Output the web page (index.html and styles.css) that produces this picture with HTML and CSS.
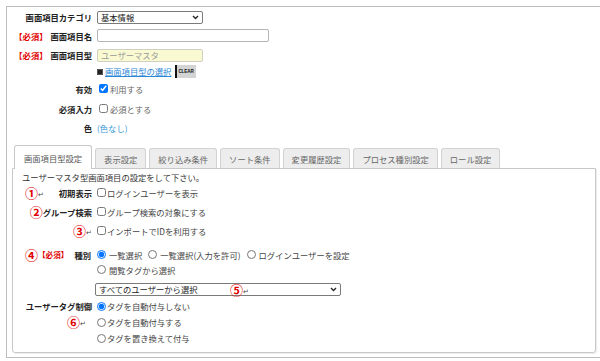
FILE: index.html
```html
<!DOCTYPE html>
<html lang="ja">
<head>
<meta charset="utf-8">
<link rel="stylesheet" href="styles.css">
</head>
<body>
<div class="frame">
  <div class="row r1">
    <div class="lbl">画面項目カテゴリ</div>
    <div class="select sel-cat"><span>基本情報</span><svg class="chev" viewBox="0 0 8 6" width="7" height="5"><path d="M1 1.2 L4 4.2 L7 1.2" fill="none" stroke="#222" stroke-width="1.6"/></svg></div>
  </div>
  <div class="row r2">
    <div class="lbl"><span class="req">【必須】</span>画面項目名</div>
    <div class="input in-name"></div>
  </div>
  <div class="row r3">
    <div class="lbl"><span class="req">【必須】</span>画面項目型</div>
    <div class="input in-type">ユーザーマスタ</div>
  </div>
  <div class="row r4">
    <div class="lbl"></div>
    <div class="linkline"><span class="sq"></span><a class="link" href="#">画面項目型の選択</a><span class="clear">CLEAR</span></div>
  </div>
  <div class="row r5">
    <div class="lbl">有効</div>
    <label class="chk top-chk"><input type="checkbox" checked><span>利用する</span></label>
  </div>
  <div class="row r6">
    <div class="lbl">必須入力</div>
    <label class="chk top-chk"><input type="checkbox"><span>必須とする</span></label>
  </div>
  <div class="row r7">
    <div class="lbl">色</div>
    <a class="color" href="#">(色なし)</a>
  </div>

  <div class="tabs">
    <div class="tab active">画面項目型設定</div>
    <div class="tab">表示設定</div>
    <div class="tab">絞り込み条件</div>
    <div class="tab">ソート条件</div>
    <div class="tab">変更履歴設定</div>
    <div class="tab">プロセス種別設定</div>
    <div class="tab">ロール設定</div>
  </div>
  <div class="panel">
    <div class="desc">ユーザーマスタ型画面項目の設定をして下さい。</div>
    <div class="prow">
      <div class="plbl"><span class="ann left">①<span class="ret">↵</span></span>初期表示</div>
      <label class="chk"><input type="checkbox"><span>ログインユーザーを表示</span></label>
    </div>
    <div class="prow">
      <div class="plbl"><span class="ann">②</span>グループ検索</div>
      <label class="chk"><input type="checkbox"><span>グループ検索の対象にする</span></label>
    </div>
    <div class="prow">
      <div class="plbl"><span class="ann">③<span class="ret">↵</span></span></div>
      <label class="chk"><input type="checkbox"><span>インポートでIDを利用する</span></label>
    </div>
    <div class="kind">
      <div class="plbl kind-lbl"><span class="ann">④</span><span class="req">【必須】</span><span class="kind-txt">種別</span></div>
      <div class="radios">
        <div class="rline">
          <label class="rad"><input type="radio" name="k" checked><span>一覧選択</span></label>
          <label class="rad"><input type="radio" name="k"><span>一覧選択(入力を許可)</span></label>
          <label class="rad"><input type="radio" name="k"><span>ログインユーザーを設定</span></label>
        </div>
        <div class="rline">
          <label class="rad"><input type="radio" name="k"><span>閲覧タグから選択</span></label>
        </div>
      </div>
    </div>
    <div class="selrow">
      <div class="select sel-user"><span>すべてのユーザーから選択</span><span class="ann over">⑤<span class="ret">↵</span></span><svg class="chev" viewBox="0 0 8 6" width="7" height="5"><path d="M1 1.2 L4 4.2 L7 1.2" fill="none" stroke="#222" stroke-width="1.6"/></svg></div>
    </div>
    <div class="tagctl">
      <div class="plbl tag-lbl">
        <div class="tl-top">ユーザータグ制御</div>
        <div class="tl-mid"><span class="ann">⑥<span class="ret">↵</span></span></div>
      </div>
      <div class="tradios">
        <label class="rad trad"><input type="radio" name="t" checked><span>タグを自動付与しない</span></label>
        <label class="rad trad"><input type="radio" name="t"><span>タグを自動付与する</span></label>
        <label class="rad trad"><input type="radio" name="t"><span>タグを置き換えて付与</span></label>
      </div>
    </div>
  </div>
</div>
</body>
</html>
```
FILE: styles.css
```css
html, body {
  margin: 0;
  padding: 0;
  background: #fff;
}
body {
  font-family: "Noto Sans CJK JP", "Noto Sans", sans-serif;
  font-size: 8.3px;
  color: #333;
}
.frame {
  margin: 6px 0 0 6px;
  width: calc(100% - 6px);
  box-sizing: border-box;
  border-top: 1px solid #bdbdbd;
  border-left: 1px solid #bdbdbd;
  border-bottom: 1px solid #bdbdbd;
  padding: 1px 0 4px 0;
}
.row {
  display: flex;
  align-items: center;
}
.r1 { height: 18px; }
.r2 { height: 19px; }
.r3 { height: 20px; }
.r4 { height: 13px; }
.r5 { height: 21px; }
.r6 { height: 19px; }
.r7 { height: 19px; }
.lbl {
  width: 85px;
  margin-right: 5px;
  text-align: right;
  font-weight: bold;
  color: #222;
  white-space: nowrap;
  line-height: 12px;
}
.req {
  color: #e00000;
  font-weight: bold;
  margin-right: 3px;
}
.select {
  position: relative;
  display: flex;
  align-items: center;
  height: 13px;
  box-sizing: border-box;
  border: 1px solid #7a7a7a;
  border-radius: 2px;
  background: #fff;
  padding: 0 3px;
  color: #222;
  line-height: 11px;
}
.select .chev {
  margin-left: auto;
}
.sel-cat { width: 106px; }
.input {
  height: 13px;
  box-sizing: border-box;
  border: 1px solid #b5b5b5;
  border-radius: 2px;
  background: #fff;
  line-height: 11px;
  padding: 0 3px;
}
.in-name { width: 172px; }
.in-type {
  width: 106px;
  background: #fafad2;
  border-color: #d0d0c0;
  color: #999;
}
.linkline {
  display: flex;
  align-items: center;
  height: 13px;
}
.sq {
  width: 4px;
  height: 4px;
  background: #222;
  border: 1px solid #555;
  margin-right: 2px;
}
.link {
  color: #2b86d6;
  text-decoration: underline;
  line-height: 11px;
}
.clear {
  margin-left: 4px;
  height: 13px;
  width: 21px;
  box-sizing: border-box;
  background: #d4d4d4;
  border-left: 2px solid #111;
  font-family: "Liberation Sans", sans-serif;
  font-size: 4.6px;
  font-weight: bold;
  color: #111;
  display: flex;
  align-items: center;
  padding-left: 1px;
  letter-spacing: -0.1px;
}
.chk, .rad {
  display: flex;
  align-items: center;
  color: #444;
  white-space: nowrap;
}
.chk input, .rad input {
  width: 9px;
  height: 9px;
  margin: 0 1px 0 0;
}
.top-chk input { margin-left: 2px; margin-right: 2px; }
.top-chk span { color: #666; }
.color {
  color: #3b9ad9;
  text-decoration: none;
}

.tabs {
  display: flex;
  align-items: flex-end;
  gap: 3px;
  margin: 8px 0 0 7px;
  height: 23px;
  position: relative;
  z-index: 1;
}
.tab {
  height: 20px;
  box-sizing: border-box;
  padding: 0 8px;
  background: #ededed;
  border: 1px solid #d2d2d2;
  border-bottom: none;
  border-radius: 3px 3px 0 0;
  color: #666;
  display: flex;
  align-items: center;
  white-space: nowrap;
}
.tab.active {
  height: 24px;
  background: #fff;
  border-color: #c8c8c8;
  margin-bottom: -1px;
  color: #555;
  padding: 1px 9px 0 9px;
}
.panel {
  margin-left: 5px;
  width: 584px;
  box-sizing: border-box;
  border: 1px solid #c8c8c8;
  border-radius: 0 0 3px 3px;
  box-shadow: 1px 1px 1px rgba(0,0,0,0.08);
  padding: 2px 0 6px 9px;
}
.desc {
  height: 12px;
  line-height: 12px;
  color: #333;
}
.prow {
  display: flex;
  align-items: center;
  height: 19px;
}
.plbl {
  width: 70px;
  margin-right: 5px;
  display: flex;
  align-items: center;
  justify-content: flex-end;
  font-weight: bold;
  color: #222;
  white-space: nowrap;
}
.ann {
  color: #e00000;
  font-size: 13px;
  font-weight: bold;
  line-height: 12px;
  display: inline-flex;
  align-items: center;
}
.ann.left {
  margin-left: 3px;
  margin-right: auto;
}
.prow .plbl .ann:not(.left) { margin-left: 3px; }
.ret {
  color: #444;
  font-size: 7px;
  font-weight: normal;
  margin-left: 0;
  position: relative;
  top: 1px;
}
.kind {
  display: flex;
  align-items: flex-start;
  margin-top: 7px;
}
.kind-lbl {
  height: 15px;
  justify-content: flex-start;
  padding-left: 3px;
  box-sizing: border-box;
}
.kind-lbl .req { margin-right: 6px; margin-left: 0; font-size: 7.6px; }
.radios { display: flex; flex-direction: column; }
.rline {
  display: flex;
  align-items: center;
  height: 15px;
  gap: 6px;
}
.rad input { margin-right: 3px; }
.selrow {
  margin-top: 6px;
  padding-left: 73px;
}
.sel-user {
  width: 246px;
}
.ann.over {
  position: absolute;
  left: 134px;
  top: 0px;
}
.tagctl {
  display: flex;
  align-items: flex-start;
  margin-top: 2px;
}
.tag-lbl {
  flex-direction: column;
  align-items: flex-end;
}
.tl-top {
  height: 16px;
  line-height: 16px;
}
.tl-mid {
  height: 16px;
  display: flex;
  align-items: center;
  padding-right: 6px;
}
.tradios { display: flex; flex-direction: column; }
.trad { height: 16px; }
.trad input { margin-right: 1px; }
```
